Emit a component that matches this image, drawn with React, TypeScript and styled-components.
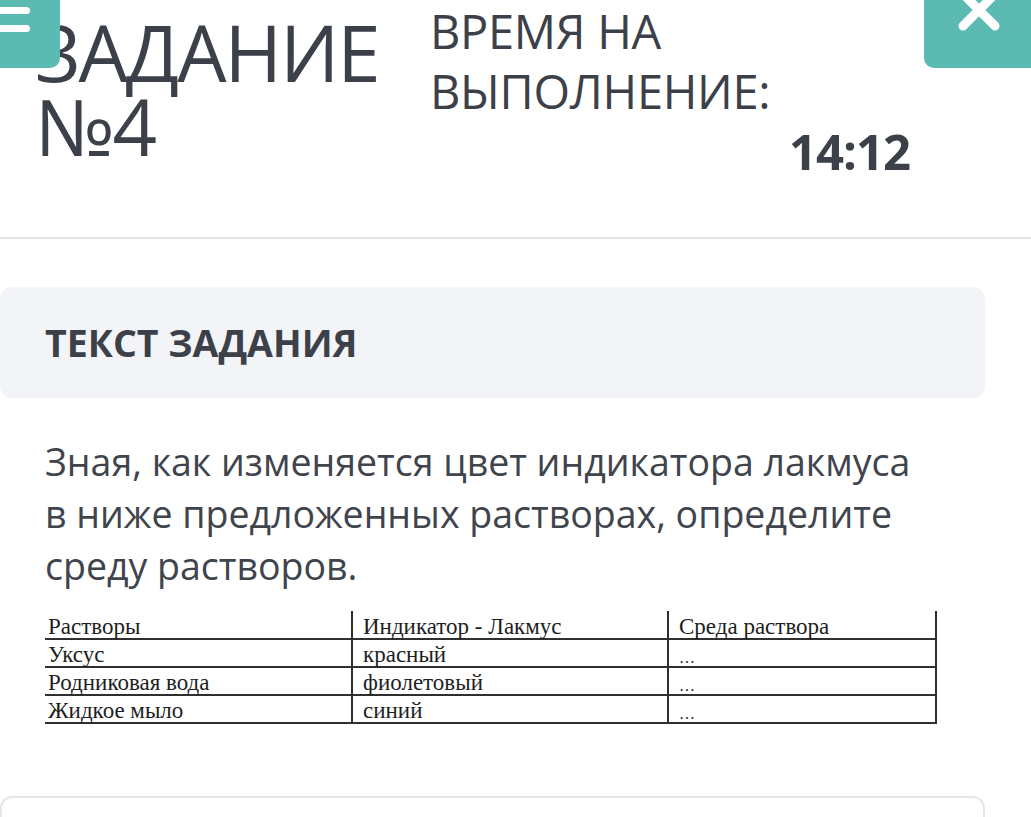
import React from "react";
import styled, { createGlobalStyle } from "styled-components";

const colors = {
    text: "#3c4049",
    teal: "#5bbab2",
    card: "#f3f4f7",
    border: "#e4e4e4",
    table: "#2f2f2f",
};

const GlobalStyle = createGlobalStyle`
    html, body {
        margin: 0;
        padding: 0;
        background: #ffffff;
    }
    body {
        font-family: "Open Sans", "Noto Sans", sans-serif;
        color: ${colors.text};
    }
`;

interface Row {
    solution: string;
    indicator: string;
    medium: string;
}

const rows: Row[] = [
    { solution: "Уксус", indicator: "красный", medium: "…" },
    { solution: "Родниковая вода", indicator: "фиолетовый", medium: "…" },
    { solution: "Жидкое мыло", indicator: "синий", medium: "…" },
];

const App: React.FC = () => {
    return (
        <>
            <GlobalStyle />
            <SPage>
                <SMenuButton aria-label="menu">
                    <SMenuBar />
                    <SMenuBar />
                </SMenuButton>
                <SCloseButton aria-label="close">
                    <svg width="50" height="50" viewBox="0 0 50 50">
                        <path
                            d="M9 -6 L41 26 M41 -6 L9 26"
                            stroke="#ffffff"
                            strokeWidth="9"
                            strokeLinecap="round"
                            fill="none"
                        />
                    </svg>
                </SCloseButton>

                <SHeader>
                    <STitle>
                        ЗАДАНИЕ
                        <br />
                        №4
                    </STitle>
                    <STimer>
                        <STimerLabel>
                            ВРЕМЯ НА
                            <br />
                            ВЫПОЛНЕНИЕ:
                        </STimerLabel>
                        <STimerValue>14:12</STimerValue>
                    </STimer>
                </SHeader>

                <STaskCard>
                    <STaskHeading>ТЕКСТ ЗАДАНИЯ</STaskHeading>
                </STaskCard>

                <SQuestion>
                    Зная, как изменяется цвет индикатора лакмуса в ниже
                    предложенных растворах, определите среду растворов.
                </SQuestion>

                <STable>
                    <colgroup>
                        <col style={{ width: 307 }} />
                        <col style={{ width: 316 }} />
                        <col style={{ width: 268 }} />
                    </colgroup>
                    <thead>
                        <tr>
                            <STh>Растворы</STh>
                            <STh>Индикатор - Лакмус</STh>
                            <STh>Среда раствора</STh>
                        </tr>
                    </thead>
                    <tbody>
                        {rows.map((r) => (
                            <tr key={r.solution}>
                                <STd>{r.solution}</STd>
                                <STd>{r.indicator}</STd>
                                <STd $dots>{r.medium}</STd>
                            </tr>
                        ))}
                    </tbody>
                </STable>

                <SAnswerCard />
            </SPage>
        </>
    );
};

const SPage = styled.div`
    position: relative;
    width: 1031px;
    height: 817px;
    overflow: hidden;
    background: #ffffff;
`;

const SMenuButton = styled.div`
    position: absolute;
    top: 0;
    left: 0;
    z-index: 2;
    width: 60px;
    height: 68px;
    background: ${colors.teal};
    border-bottom-right-radius: 10px;
    display: flex;
    flex-direction: column;
    gap: 11px;
    padding-top: 7px;
    box-sizing: border-box;
`;

const SMenuBar = styled.div`
    width: 30px;
    height: 7px;
    background: #ffffff;
    border-radius: 0 4px 4px 0;
`;

const SCloseButton = styled.div`
    position: absolute;
    top: 0;
    right: 0;
    z-index: 2;
    width: 107px;
    height: 68px;
    background: ${colors.teal};
    border-bottom-left-radius: 10px;
    display: flex;
    justify-content: flex-start;
    padding-left: 30px;
    box-sizing: border-box;
    svg {
        display: block;
    }
`;

const SHeader = styled.header`
    display: flex;
    align-items: flex-start;
    padding: 1px 0 56px 35px;
    border-bottom: 2px solid ${colors.border};
`;

const STitle = styled.h1`
    margin: 14px 0 0;
    width: 395px;
    font-size: 78px;
    font-weight: 400;
    line-height: 74px;
    letter-spacing: -2px;
    color: ${colors.text};
`;

const STimer = styled.div`
    display: flex;
    flex-direction: column;
    width: 480px;
`;

const STimerLabel = styled.div`
    font-size: 47px;
    font-weight: 400;
    line-height: 60px;
    letter-spacing: -0.3px;
`;

const STimerValue = styled.div`
    align-self: flex-end;
    font-size: 49px;
    font-weight: 700;
    line-height: 60px;
    letter-spacing: -1px;
`;

const STaskCard = styled.section`
    display: flex;
    align-items: center;
    height: 111px;
    margin: 48px 46px 0 0;
    padding-left: 45px;
    background: ${colors.card};
    border-radius: 12px;
`;

const STaskHeading = styled.h2`
    margin: 0;
    font-size: 37.5px;
    font-weight: 700;
    letter-spacing: 0;
`;

const SQuestion = styled.p`
    margin: 38px 0 0 45px;
    max-width: 880px;
    font-size: 37.5px;
    line-height: 52px;
    color: #40444c;
`;

const STable = styled.table`
    margin: 19px 0 0 45px;
    width: 891px;
    border-collapse: collapse;
    table-layout: fixed;
    font-family: "Liberation Serif", "Times New Roman", serif;
    font-size: 23px;
    color: #1e1e1e;
`;

const cellBase = `
    height: 26px;
    padding: 0 5px;
    line-height: 22px;
    text-align: left;
    vertical-align: bottom;
    border-bottom: 2px solid ${colors.table};
    border-right: 2px solid ${colors.table};
    white-space: nowrap;
    &:first-child {
        padding-left: 3px;
    }
    &:not(:first-child) {
        border-left: 2px solid ${colors.table};
        padding-left: 10px;
    }
`;

const STh = styled.th`
    ${cellBase};
    font-weight: 400;
    height: 27px;
`;

const STd = styled.td<{ $dots?: boolean }>`
    ${cellBase};
    ${(p) => (p.$dots ? "font-size: 16px; letter-spacing: 3px; line-height: 16px;" : "")}
`;

const SAnswerCard = styled.div`
    height: 80px;
    margin: 72px 46px 0 0;
    border: 2px solid #e6e6e6;
    border-radius: 12px;
    background: #ffffff;
`;

export default App;
